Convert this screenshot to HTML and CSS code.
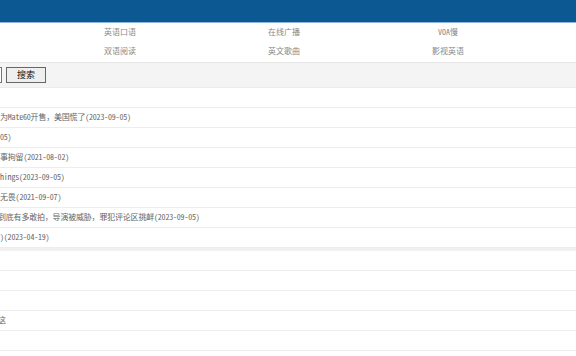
FILE: index.html
```html
<!DOCTYPE html>
<html lang="zh-CN">
<head>
    <meta charset="UTF-8">
    <title>英语学习</title>
    <link rel="stylesheet" href="styles.css">
</head>
<body>
    <div class="top-bar"></div>
    <div class="nav">
        <a href="#">英语口语</a>
        <a href="#">在线广播</a>
        <a href="#">VOA慢</a>
        <a href="#">双语阅读</a>
        <a href="#">英文歌曲</a>
        <a href="#">影视英语</a>
    </div>
    <div class="search-bar">
        <input type="text" class="search-input">
        <button class="search-btn">搜索</button>
    </div>
    <ul class="news-list">
        <li></li>
        <li><a href="#">为Mate60开售，美国慌了(2023-09-05)</a></li>
        <li><a href="#">05)</a></li>
        <li><a href="#">事拘留(2021-08-02)</a></li>
        <li><a href="#">hings(2023-09-05)</a></li>
        <li><a href="#">无畏(2021-09-07)</a></li>
        <li><a href="#" class="cut">到底有多敢拍，导演被威胁，罪犯评论区挑衅(2023-09-05)</a></li>
        <li><a href="#">)(2023-04-19)</a></li>
    </ul>
    <div class="divider"></div>
    <ul class="news-list second">
        <li></li>
        <li></li>
        <li></li>
        <li><a href="#" class="cut">这</a></li>
        <li></li>
    </ul>
</body>
</html>
```

FILE: styles.css
```css
html, body {
    margin: 0;
    padding: 0;
    background: #fff;
    overflow: hidden;
    font-family: "Noto Sans Mono CJK SC", "Noto Sans CJK SC", sans-serif;
    font-size: 8px;
    color: #555;
}

a {
    color: #555;
    text-decoration: none;
}

.top-bar {
    height: 22px;
    background: #0c5892;
    border-bottom: 1px solid #8ab6de;
}

.nav {
    display: grid;
    grid-template-columns: repeat(3, 164px);
    padding: 0 0 1px 38px;
    border-bottom: 1px solid #e6e6e6;
}

.nav a {
    display: block;
    height: 19px;
    line-height: 18px;
    text-align: center;
    color: #888;
}

.search-bar {
    display: flex;
    align-items: center;
    gap: 4px;
    height: 24px;
    background: #f4f4f4;
}

.search-input {
    width: 60px;
    height: 16px;
    margin: 0 0 0 -58px;
    padding: 0;
    box-sizing: border-box;
    border: 1px solid #767676;
    background: #fff;
}

.search-btn {
    width: 40px;
    height: 16px;
    padding: 0;
    box-sizing: border-box;
    border: 1px solid #666;
    background: #efefef;
    font-family: "Noto Sans CJK SC", sans-serif;
    font-size: 9px;
    line-height: 14px;
    color: #111;
}

.news-list {
    list-style: none;
    margin: 0;
    padding: 0;
    border-top: 1px solid #ececec;
}

.news-list li {
    height: 19px;
    line-height: 18px;
    border-bottom: 1px solid #ededed;
    white-space: nowrap;
    letter-spacing: -0.2px;
}

.news-list a {
    color: #666;
}

.news-list .cut {
    display: inline-block;
    text-indent: -2px;
}

.news-list.second {
    border-top: none;
}

.divider {
    height: 3px;
    background: #f1f1f1;
}
```
